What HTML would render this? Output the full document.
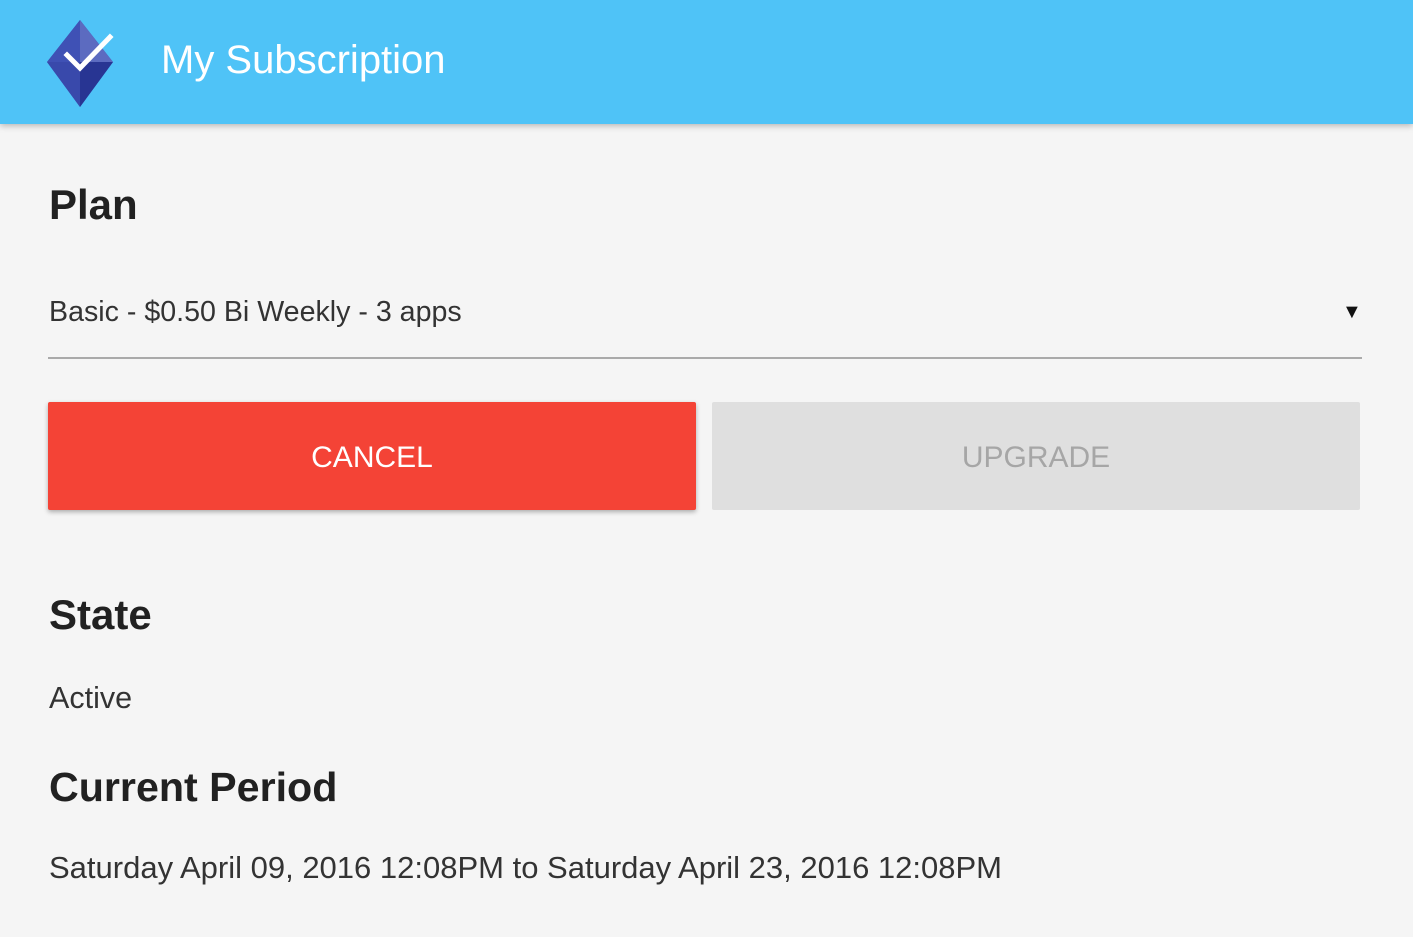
<!DOCTYPE html>
<html><head><style>
body{margin:0;width:1413px;height:937px;background:#f5f5f5;font-family:"Liberation Sans",sans-serif;overflow:hidden;position:relative}
.hdr{position:absolute;left:0;top:0;width:1413px;height:124px;background:#4fc3f7;box-shadow:0 2px 6px rgba(0,0,0,.25)}
.t{position:absolute;white-space:nowrap}
</style></head><body>
<div class="hdr">
<svg style="position:absolute;left:0;top:0" width="140" height="124">
<polygon points="80,20 47,62 80,107 113,62" fill="#3f51b5"/>
<polygon points="80,20 47,62 80,62" fill="#3f51b5"/>
<polygon points="80,20 113,62 80,62" fill="#5c6bc0"/>
<polygon points="47,62 80,107 80,62" fill="#3949ab"/>
<polygon points="113,62 80,107 80,62" fill="#283593"/>
<polyline points="67,55 80,68 110,37" fill="none" stroke="#fff" stroke-width="5" stroke-linecap="square"/>
</svg>
<div class="t" style="left:161px;top:38px;font-size:40px;color:#fff">My Subscription</div>
</div>
<div class="t" style="left:49px;top:181px;font-size:42px;font-weight:bold;color:#212121">Plan</div>
<div class="t" style="left:49px;top:296px;font-size:28.6px;color:#333">Basic - $0.50 Bi Weekly - 3 apps</div>
<div class="t" style="left:1342px;top:301px;font-size:20px;color:#111">▼</div>
<div style="position:absolute;left:48px;top:357px;width:1314px;height:2px;background:#aaa"></div>
<div style="position:absolute;left:48px;top:402px;width:648px;height:108px;background:#f44336;border-radius:2px;box-shadow:0 2px 5px rgba(0,0,0,.3);color:#fff;font-size:30px;text-align:center;line-height:112px">CANCEL</div>
<div style="position:absolute;left:712px;top:402px;width:648px;height:108px;background:#dfdfdf;border-radius:2px;color:#a6a6a6;font-size:30px;text-align:center;line-height:112px">UPGRADE</div>
<div class="t" style="left:49px;top:591px;font-size:42px;font-weight:bold;color:#212121">State</div>
<div class="t" style="left:49px;top:681px;font-size:30.5px;color:#333">Active</div>
<div class="t" style="left:49px;top:764px;font-size:41.2px;font-weight:bold;color:#212121">Current Period</div>
<div class="t" style="left:49px;top:850px;font-size:31px;color:#333">Saturday April 09, 2016 12:08PM to Saturday April 23, 2016 12:08PM</div>
</body></html>
